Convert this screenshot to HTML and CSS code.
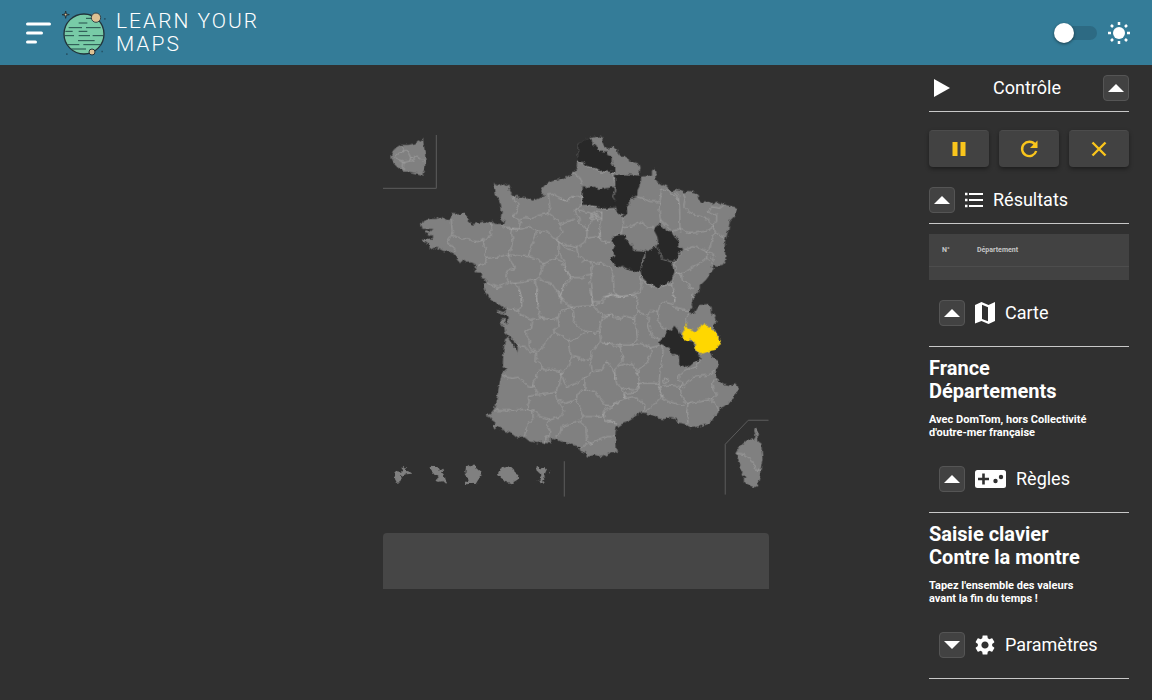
FILE: index.html
```html
<!DOCTYPE html>
<html lang="fr">
<head>
<meta charset="utf-8">
<title>Learn Your Maps</title>
<link rel="stylesheet" href="styles.css">
</head>
<body>
<header class="topbar">
  <button class="menu-btn" aria-label="Menu">
    <svg width="26" height="22" viewBox="0 0 26 22"><path d="M1.500 2H23.500M1.500 11H15.500M1.500 20H9.500" stroke="#fff" stroke-width="3" stroke-linecap="round"/></svg>
  </button>
  <svg class="logo" width="44" height="46" viewBox="0 0 132 138" aria-hidden="true">
    <circle cx="66" cy="72" r="60" fill="#78cba7" stroke="#22333b" stroke-width="4"/>
    <path d="M72 25H98M50 39H76M20 53H60M72 53H116M10 64H32M50 64H76M8 77H36M50 77H84M92 77H124M48 92H98M16 104H52M64 104H118M28 117H72" stroke="#254b4b" stroke-width="3"/>
    <circle cx="102" cy="23" r="14" fill="#dfc193" stroke="#33434a" stroke-width="3"/>
    <circle cx="90" cy="126" r="9" fill="#dfc193" stroke="#22333b" stroke-width="3"/>
    <path d="M11 3L13 12L22 14L13 16L11 25L9 16L0 14L9 12Z" fill="#dfc193" stroke="#22333b" stroke-width="3"/>
    <path d="M126 24h5v5h-5zM118 122h5v5h-5zM12 130h5v5h-5z" fill="#265568"/>
  </svg>
  <h1 class="brand">LEARN YOUR<br>MAPS</h1>
  <label class="theme">
    <input class="switch" type="checkbox" role="switch" aria-label="Thème clair">
    <svg width="22" height="22" viewBox="0 0 22 22"><circle cx="11" cy="11" r="6" fill="#fff"/><path d="M11 0V3M11 19V22M0 11H3M19 11H22M3 3L5 5M17 17L19 19M3 19L5 17M17 5L19 3" stroke="#fff" stroke-width="2.500"/></svg>
  </label>
</header>
<div class="layout">
  <main class="board">
    <svg class="map" viewBox="24 30 1158 1086" role="img" aria-label="France, départements">
      <filter id="coast" filterUnits="userSpaceOnUse" x="24" y="30" width="1158" height="1086" color-interpolation-filters="sRGB">
        <feTurbulence type="fractalNoise" baseFrequency="0.07" numOctaves="2" seed="4"/>
        <feDisplacementMap in="SourceGraphic" scale="14" xChannelSelector="R" yChannelSelector="G"/>
      </filter>
      <g filter="url(#coast)">
      <g class="land">
        <path d="M353 175L362 175 374 181 385 178 394 183 404 178 405 187 400 191 404 200 412 208 415 216 427 213 438 216 456 221 475 227 490 222 506 213 515 209 503 207 499 199 501 190 510 180 530 169 555 161 580 155 595 142 607 128 605 118 607 110 609 85 607 58 620 48 635 42 650 38 667 36 677 32 683 40 682 50 687 62 695 68 698 76 701 68 715 65 725 72 728 83 731 93 745 92 757 98 760 110 775 110 793 117 797 128 793 150 798 155 823 153 831 148 831 140 840 132 845 142 841 155 845 168 860 178 875 183 883 193 893 200 900 195 915 196 927 202 940 198 963 202 972 213 972 222 985 233 1000 230 1010 238 1025 230 1035 232 1047 238 1065 243 1090 248 1082 262 1077 275 1065 287 1060 315 1055 335 1050 350 1050 375 1052 400 1050 410 1043 420 1027 422 1015 420 1010 425 1017 430 1010 440 1000 455 993 465 975 482 973 497 960 512 951 525 950 540 953 547 943 560 945 568 957 563 965 550 975 540 1000 538 1010 550 1011 565 1023 580 1025 590 1015 600 1020 615 1037 645 1030 665 1005 678 1010 690 1017 702 1030 707 1033 720 1023 735 1025 750 1023 760 1033 770 1047 780 1065 784 1083 778 1090 785 1087 800 1078 810 1077 823 1060 833 1050 842 1035 852 1030 865 1017 873 1013 885 1003 895 987 901 970 905 955 908 943 909 935 899 920 895 905 893 903 883 890 880 875 880 865 883 853 881 840 873 820 868 805 867 797 861 780 875 760 890 740 898 725 908 722 920 721 950 722 973 728 985 715 980 700 987 680 997 660 990 637 995 630 983 615 977 613 965 595 960 580 955 560 950 540 942 528 938 528 955 510 955 500 951 490 955 465 950 448 937 430 942 415 930 400 922 380 913 365 905 357 911 355 903 362 893 350 885 345 877 331 873 345 867 357 853 365 820 373 780 380 745 394 732 383 727 385 685 390 640 397 635 410 655 420 665 427 685 428 670 422 653 407 640 390 623 388 607 377 593 378 583 388 583 395 603 398 580 390 568 380 565 365 560 368 555 390 563 395 550 385 548 370 537 355 530 345 523 337 507 327 495 325 480 335 474 328 462 317 458 325 450 322 443 300 442 297 432 304 420 290 412 275 413 262 405 258 415 250 405 240 390 228 382 205 378 190 370 178 368 165 374 162 360 140 343 155 340 170 345 175 335 165 328 150 325 148 318 165 321 175 312 160 312 143 312 138 298 145 287 165 282 185 282 200 276 212 285 230 279 232 267 250 268 270 263 278 278 285 292 292 299 310 294 325 290 338 293 350 286 357 297 385 297 390 292 380 285 376 280 380 265 378 240 372 225 362 208 360 190Z"/>
        <path d="M145 41L146 60 150 80 152 110 150 128 142 150 125 145 100 140 85 140 65 125 52 110 46 98 50 85 60 70 80 60 100 60 120 55 135 47Z"/>
        <path transform="translate(675 495)" d="M465 412L470 410 474 425 473 440 476 455 484 460 486 485 488 510 482 540 480 560 470 590 462 592 445 585 432 578 432 568 440 562 425 555 428 545 415 535 422 525 412 510 415 500 407 490 415 475 430 460 445 448 462 448 467 440 463 425Z"/>
        <g transform="translate(0 945)">
          <path d="M82 92L84 82 92 82 94 92 105 96 112 101 95 103 85 107 78 101 80 115 76 127 66 129 60 118 57 100 62 94 78 95Z"/>
          <path d="M163 80L175 76 188 82 194 92 205 86 207 92 198 97 207 108 208 118 216 128 212 133 202 124 190 126 180 122 184 116 192 114 178 104 168 92Z"/>
          <path d="M273 80L282 75 300 78 313 90 321 97 316 110 308 122 302 132 285 132 270 133 270 126 278 122 275 108 271 95Z"/>
          <path d="M369 100L375 87 390 79 408 80 420 92 423 102 431 106 426 122 412 130 395 127 378 117Z"/>
          <path d="M484 80L490 77 496 85 510 84 516 88 512 96 508 108 512 118 504 122 510 130 495 133 490 122 498 118 494 100 488 95ZM519 95l5-3v9zM488 118l4 2-1 4z"/>
        </g>
      </g>
      <g class="found" transform="translate(555 0)">
        <path d="M53 58L65 48 80 42 93 40 98 55 110 65 112 75 130 82 140 82 142 90 155 95 155 112 163 125 163 143 150 142 138 140 120 135 110 132 95 127 80 122 70 112 52 110 55 85Z"/>
        <path d="M66 182L85 188 105 185 115 195 135 190 150 188 163 185 163 200 158 215 165 225 162 250 150 250 130 252 110 245 90 240 68 242Z"/>
        <path d="M165 150L200 148 243 152 243 165 238 185 233 195 232 212 212 218 208 228 210 240 200 245 202 262 190 275 175 262 165 255 162 225 158 215 165 200Z"/>
        <path d="M160 335L175 330 195 330 200 345 215 358 220 375 250 377 255 385 250 400 245 415 240 442 220 435 200 430 185 422 175 427 160 415 152 402 163 390 160 375 165 360 155 350Z"/>
        <path d="M300 295L315 310 320 320 335 322 345 338 357 345 355 360 368 375 358 385 352 400 340 410 325 408 305 402 300 380 288 365 295 355 292 335 280 312Z"/>
        <path d="M255 378L275 372 290 367 300 380 305 402 330 410 340 420 345 440 335 465 325 475 290 488 265 475 245 455 242 440 250 410 255 395Z"/>
        <path transform="translate(120 495)" d="M223 107L235 122 245 140 255 150 280 155 290 185 302 205 298 212 285 212 270 225 260 233 250 228 238 225 237 195 225 192 215 193 210 175 180 165 178 155 190 145 205 122 215 120Z"/>
      </g>
      <g class="border">
        <path d="M229 279L230 300 232 318 229 332 222 342 218 348 220 358 235 365 240 372 232 382M229 335L248 336 262 342 278 338 290 347 308 350 325 345 338 335 350 330 347 318 352 310 350 292M325 345L327 360 335 372 330 390 335 402 330 418 318 420 304 422M333 400L350 398 375 395 400 388 408 370 415 350 410 330 413 310M380 300L385 308 398 310 412 310 425 315 433 308 437 290 425 280 412 272 422 265 430 250 428 235 415 225 412 212M432 282L450 278 475 280 495 270 522 265 524 240 520 212M515 210L535 208 550 215 565 225 575 230 583 223 600 215M522 265L535 275 548 285 555 305 562 320 550 335 550 350M412 310L440 312 465 305 485 318 500 322 512 318 525 328 535 340 550 345 553 370 548 390 540 402 520 410 505 417M485 318L480 340 470 360 465 378 460 395M400 388L425 392 460 395 480 400 505 415M400 388L405 405 415 420 418 430 395 440 393 455 400 468 415 475 440 473 465 467 485 465 493 458 498 440 505 415M335 474L350 480 370 488 385 480 400 470M420 475L432 490 438 510 438 540M480 466L487 490 485 515 487 540M493 460L510 470 530 475 540 490 550 508 558 520 562 540M540 402L560 410 572 430 580 450 590 462 575 478 565 480 562 500 557 512M550 350L575 370 600 378M555 298L575 290 600 282"/>
        <path d="M82 60L88 68 80 80 100 80 107 95 105 108 88 112 70 105 60 98 64 90 80 80M107 98L125 93 135 98 148 112M105 108L118 108 117 98M86 112L84 138"/>
        <path transform="translate(555 0)" d="M40 142L60 158 68 180 66 215 66 240M0 222L20 226 35 215 66 215M52 110L70 114 82 124 115 136 125 145 140 140 163 145M66 240L90 242 110 245 130 252 160 250 175 262 190 275M66 240L45 255 48 265 58 285 56 293 75 305 82 320 80 338 75 350 50 368 25 362 0 352M48 253L75 260 95 265 110 258 120 262 126 260 125 285M95 265L92 280 98 285 85 305 78 318M98 268L112 268 125 280 112 285 98 282ZM105 262L112 290M98 275H122M125 285L118 320 120 338 105 335 82 340M120 320L122 345 130 352 155 352M50 368L55 392 75 405M65 412L75 405 100 412 125 415 150 425 155 440M0 382L5 400 15 412 18 435 35 458 65 458 80 450 95 448 92 430 100 425 90 410M160 148L165 180M232 215L250 220 270 230 300 230 298 260 302 285 300 298M190 275L190 300 188 305 215 303 235 292 250 293 260 308 280 308M188 305L185 325 165 332M300 230L305 195 325 195 335 210 350 212 358 240 360 270 360 300 362 320M338 200L355 208 357 240M370 203L375 220 372 245 390 262 420 275 440 282 460 298 463 320M302 285L320 300 335 320 360 310 385 325 420 322 440 318 462 305M445 260L455 245 480 250 492 240M445 260L470 270 470 290 460 300M463 322L490 335 495 350M463 322L455 350 450 370 440 378M366 375L380 373 400 365 420 370 440 378 465 390M440 378L440 400 460 418M465 390L455 400 462 410M440 400L420 415 400 425 370 445 350 445M365 375L352 400 345 410 345 440M350 445L365 450 368 465 380 470 390 490 400 490M345 440L335 470 335 480 342 510 345 530M155 440L160 460 162 490 170 510 190 515 215 510 240 500 245 480 240 460 240 440M95 448L90 470 95 500 98 540M0 512L10 490 20 465 35 458M242 462L265 480 290 488 320 480 335 480M98 530L120 530 130 515 145 515 155 505 170 510M163 185L163 200 158 215 165 225M255 378L255 395 250 400 245 415M290 367L300 380 305 402 330 410"/>
        <path transform="translate(285 495)" d="M147 0L155 25 155 50 145 60 148 72 170 82 188 90 215 85 240 88 265 85 270 65 295 55 310 52M202 0L198 25 205 50 210 65 205 72 215 85M262 0L272 20 290 45 310 52 345 48 370 48 385 40 400 42 400 30 410 20 430 12 450 20M110 55L130 58 145 60M360 0L365 25 370 48 380 60 395 72 398 85 390 105 388 125 375 130 345 123 325 110 310 95 312 75 308 55M398 80L425 72 430 85 450 88M188 92L185 115 168 122 170 140 178 150 178 168 185 180 200 183 215 175 225 160 245 135 255 128 250 122 265 110 262 88M142 165L165 170 180 185 200 190 198 215 215 225 218 240 245 238 272 245M255 128L275 138 295 152 298 180 305 200 300 225 285 240 275 250M295 152L320 145 345 128M388 125L392 150 380 170 365 185 360 208 345 212 330 205 310 200M392 155L415 160 435 170 450 172M360 208L365 230 368 245 345 262 320 280 290 290 282 275 275 250M368 245L395 242 405 225 412 215 425 235 432 248 440 270M345 262L345 298M95 255L110 262 125 265 145 262 160 275 175 290 188 292 190 275 200 265 205 240 215 235M188 285L200 300 198 315 175 320 178 335 170 360M72 362L110 362 140 360 170 358 188 362 190 385 170 410 163 440M200 315L225 312 255 308 265 290 270 275 275 250M190 362L205 375 220 385 240 390 270 380 285 365 270 340 260 325 255 308M265 328L285 340 300 335 320 325 322 310 345 298 375 305 390 325 405 345M240 390L230 405 240 420 237 440 228 440 227 458M318 325L330 350 342 380 330 395 300 402 275 410 270 430 258 445M342 380L370 380 400 378 400 365 410 350M400 378L410 390 430 395 440 408M330 395L348 412 350 450 365 460M330 475L345 465 365 460 385 450 410 440 435 440M405 345L430 348 450 335"/>
        <path transform="translate(675 495)" d="M15 20L30 15 60 20 90 15 115 20 110 40 115 65 100 85 75 78 60 85 35 72 20 80 8 92M115 65L135 75 150 65 172 65 180 45 190 35 215 42 225 35 220 15 220 0M100 85L110 120 112 145 95 165 60 165 35 160 5 160M172 65L175 90 185 110 205 120M145 70L145 100 150 120 155 138 180 148M215 42L225 55 250 60 270 62M280 10L275 40M270 68L260 80 258 98M95 165L120 160 150 170 155 190 140 220 120 235 110 255M150 175L180 165M60 165L65 190 70 210 55 225 45 235 45 255 50 280 65 295 100 300 115 290 118 270 110 240 95 220 75 225 55 230M185 165L190 185 185 215 180 250 178 280 155 280 118 280M178 280L180 290 205 285 235 288 243 295M190 268L200 264 204 275 195 280ZM243 295L250 280 235 270 238 255 255 240 275 235 290 230 300 210M243 295L265 275 280 262 300 258 330 255 345 240M350 265L335 280 340 300 350 315 335 328 300 335 265 340 250 330 243 310 243 295M180 290L185 320 205 335 235 342 260 345M335 328L350 350 358 365M265 340L260 370 265 400M178 290L178 305 185 320 170 335 155 350 135 365M118 280L112 305 75 310 75 325 100 320 125 335 135 350 130 365M65 295L75 325 55 335 35 350 15 365 10 380 20 395 35 390 50 405M407 490L430 492 450 505 460 522 470 542 480 540"/>
      </g>
      <path class="current" transform="translate(675 495)" d="M258 98L265 115 275 120 290 125 300 110 305 100 310 105 316 100 318 108 330 110 335 120 345 122 350 138 363 150 358 165 345 180 330 183 310 190 295 187 287 175 288 160 275 148 255 155 245 140 250 125 255 115Z"/>
      </g>
      <path class="frame" d="M24 190H184V30M568 1009V1115M1051 1109V958L1120 886H1181"/>
    </svg>
    <input class="answer" type="text" aria-label="Réponse">
  </main>
  <aside class="panel">
    <section>
      <div class="head head-spread">
        <svg width="22" height="18" viewBox="0 0 22 18"><path d="M5 0L21 9L5 18Z" fill="#fff"/></svg>
        <h2 class="title">Contrôle</h2>
        <button class="fold" aria-label="Replier Contrôle"><svg width="16" height="8" viewBox="0 0 16 8"><path d="M8 0L16 8H0Z" fill="#fff"/></svg></button>
      </div>
      <div class="actions">
        <button class="action" aria-label="Pause"><svg width="24" height="24" viewBox="0 0 24 24"><path d="M5.500 5H10.500V19H5.500ZM13.500 5H18.500V19H13.500Z" fill="#f9c51c"/></svg></button>
        <button class="action" aria-label="Recommencer"><svg width="24" height="24" viewBox="0 0 24 24"><path d="M18 7.500A7.200 7.200 0 1 0 19.200 14" fill="none" stroke="#f9c51c" stroke-width="2.400"/><path d="M20.500 3.500V11H13Z" fill="#f9c51c"/></svg></button>
        <button class="action" aria-label="Arrêter"><svg width="24" height="24" viewBox="0 0 24 24"><path d="M5.500 5.500L18.500 18.500M18.500 5.500L5.500 18.500" stroke="#f9c51c" stroke-width="2.400"/></svg></button>
      </div>
    </section>
    <section>
      <div class="head">
        <button class="fold" aria-label="Replier Résultats"><svg width="16" height="8" viewBox="0 0 16 8"><path d="M8 0L16 8H0Z" fill="#fff"/></svg></button>
        <svg width="18" height="16" viewBox="0 0 18 16"><path d="M4 2H18M4 8H18M4 14H18" stroke="#fff" stroke-width="2"/><path d="M0 2H2.500M0 8H2.500M0 14H2.500" stroke="#fff" stroke-width="2.500"/></svg>
        <h2 class="title">Résultats</h2>
      </div>
      <table class="results">
        <thead><tr><th class="num">N°</th><th>Département</th></tr></thead>
        <tbody><tr><td colspan="2"></td></tr></tbody>
      </table>
    </section>
    <section>
      <div class="head head-inset">
        <button class="fold" aria-label="Replier Carte"><svg width="16" height="8" viewBox="0 0 16 8"><path d="M8 0L16 8H0Z" fill="#fff"/></svg></button>
        <svg width="20" height="22" viewBox="0 0 20 22"><path fill-rule="evenodd" d="M0 3L6.500 0L13.500 3L20 0V19L13.500 22L6.500 19L0 21.500ZM7 2.800V17L13 19.300V5.200Z" fill="#fff"/></svg>
        <h2 class="title">Carte</h2>
      </div>
      <h3 class="name">France<br>Départements</h3>
      <p class="note">Avec DomTom, hors Collectivité<br>d'outre-mer française</p>
    </section>
    <section>
      <div class="head head-inset">
        <button class="fold" aria-label="Replier Règles"><svg width="16" height="8" viewBox="0 0 16 8"><path d="M8 0L16 8H0Z" fill="#fff"/></svg></button>
        <svg width="31" height="18" viewBox="0 0 31 18"><rect width="31" height="18" rx="2.500" fill="#fff"/><path d="M8.500 3.500V14.500M3 9H14" stroke="#303030" stroke-width="2.600"/><circle cx="20.500" cy="11" r="2.200" fill="#303030"/><circle cx="26" cy="7" r="2.200" fill="#303030"/></svg>
        <h2 class="title">Règles</h2>
      </div>
      <h3 class="name">Saisie clavier<br>Contre la montre</h3>
      <p class="note">Tapez l'ensemble des valeurs<br>avant la fin du temps !</p>
    </section>
    <section>
      <div class="head head-inset">
        <button class="fold" aria-label="Déplier Paramètres"><svg width="16" height="8" viewBox="0 0 16 8"><path d="M8 8L0 0H16Z" fill="#fff"/></svg></button>
        <svg width="20" height="20" viewBox="2 2 20 20"><path fill="#fff" d="M19.140 12.940c.04-.3.060-.61.060-.94 0-.32-.02-.64-.07-.94l2.030-1.580c.18-.14.230-.41.120-.61l-1.920-3.320c-.12-.22-.37-.29-.59-.22l-2.390.96c-.5-.38-1.030-.7-1.620-.94l-.36-2.540c-.04-.24-.24-.41-.48-.41h-3.840c-.24 0-.43.17-.47.41l-.36 2.540c-.59.24-1.130.57-1.620.94l-2.390-.96c-.22-.08-.47 0-.59.220L2.740 8.870c-.12.210-.08.470.120.610l2.030 1.580c-.05.3-.09.630-.09.940s.02.640.070.940l-2.030 1.580c-.18.140-.23.410-.12.610l1.920 3.320c.12.220.37.290.59.220l2.390-.96c.5.380 1.030.7 1.620.940l.36 2.540c.05.240.24.410.48.410h3.840c.24 0 .44-.17.470-.41l.36-2.540c.59-.24 1.130-.56 1.620-.94l2.390.96c.22.080.47 0 .59-.22l1.920-3.320c.12-.22.070-.47-.12-.61l-2.010-1.580zM12 15.600c-1.980 0-3.600-1.620-3.600-3.600s1.620-3.600 3.600-3.600 3.600 1.620 3.600 3.600-1.620 3.600-3.600 3.600z"/></svg>
        <h2 class="title">Paramètres</h2>
      </div>
    </section>
  </aside>
</div>
</body>
</html>
```
FILE: styles.css
```css
* { box-sizing: border-box; }

body {
  margin: 0;
  min-height: 100vh;
  background: #303030;
  color: #fff;
  font-family: Roboto, "Liberation Sans", sans-serif;
}

button { padding: 0; border: 0; background: none; cursor: pointer; }
svg { display: block; flex: none; }
h1, h2, h3, p { margin: 0; }

.topbar {
  display: flex;
  align-items: center;
  min-height: 65px;
  padding: 0 22px 0 26px;
  background: #347c98;
}
.logo { margin: 0 10px; }
.brand {
  font-size: 21px;
  font-weight: 300;
  line-height: 23px;
  letter-spacing: 2px;
}
.theme { display: flex; align-items: center; gap: 11px; margin-left: auto; }
.switch {
  appearance: none;
  display: flex;
  align-items: center;
  width: 41px;
  height: 14px;
  margin: 0;
  border-radius: 7px;
  background: #2d6a83;
}
.switch::before {
  content: "";
  width: 20px;
  height: 20px;
  margin-left: -2px;
  border-radius: 50%;
  background: #fff;
  box-shadow: 0 1px 3px rgba(0, 0, 0, .5);
}

.layout { display: grid; grid-template-columns: 1fr 33.5% 1fr; }
.board {
  grid-column: 2;
  display: flex;
  flex-direction: column;
  gap: 36px;
  padding-top: 70px;
}
.map { width: 100%; height: auto; }
.land { fill: #808080; }
.found { fill: #282828; }
.current { fill: gold; }
.border { fill: none; stroke: #c8c8c8; stroke-width: 2; stroke-opacity: .65; }
.frame { fill: none; stroke: #5c5c5c; stroke-width: 3; }
.answer {
  width: 100%;
  height: 56px;
  padding: 0 16px;
  border: 0;
  border-radius: 4px 4px 0 0;
  background: #464646;
  color: #fff;
  font: inherit;
}

.panel { width: 200px; margin-right: 23px; justify-self: end; }
.head {
  display: flex;
  align-items: center;
  gap: 10px;
  padding: 10px 0;
  border-bottom: 1px solid #c8c8c8;
}
.head-spread { justify-content: space-between; }
.head-inset { padding: 20px 10px; }
.title { font-size: 18px; font-weight: 400; line-height: 26px; }
.fold {
  display: grid;
  place-items: center;
  width: 26px;
  height: 26px;
  border: 1px solid #555;
  border-radius: 4px;
  background: #424242;
}
.actions {
  display: grid;
  grid-template-columns: repeat(3, 1fr);
  gap: 10px;
  padding: 18px 0 10px;
}
.action {
  display: grid;
  place-items: center;
  height: 37px;
  border-top: 1px solid #4c4c4c;
  border-radius: 4px;
  background: #424242;
  box-shadow: 0 2px 4px rgba(0, 0, 0, .4);
}
.results {
  width: 100%;
  margin-top: 10px;
  border-collapse: collapse;
  background: #424242;
  text-align: left;
}
.results th {
  height: 32px;
  padding: 0;
  border-bottom: 1px solid #4d4d4d;
  color: #c6c6c6;
  font-size: 7px;
  font-weight: 700;
}
.results .num { width: 48px; padding-left: 13px; }
.results td { height: 14px; padding: 0; }
.name { margin-top: 10px; font-size: 20px; font-weight: 700; line-height: 23px; }
.note { margin: 10px 0 7px; font-size: 11px; font-weight: 700; line-height: 13px; }
```
